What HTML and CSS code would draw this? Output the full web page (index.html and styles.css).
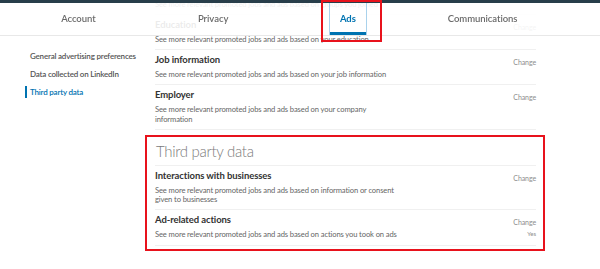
FILE: index.html
```html
<!DOCTYPE html>
<html lang="en">
<head>
<meta charset="utf-8">
<title>Ads settings</title>
<link rel="stylesheet" href="styles.css">
</head>
<body>
<nav class="tabs">
  <div class="tabs-inner">
    <div class="tab"><a class="tab-link">Account</a></div>
    <div class="tab"><a class="tab-link">Privacy</a></div>
    <div class="tab"><a class="tab-link is-active">Ads</a></div>
    <div class="tab"><a class="tab-link">Communications</a></div>
  </div>
</nav>
<div class="mark mark-tab"></div>
<div class="mark mark-section"></div>

<div class="page">
  <aside class="sidebar">
    <a class="side-link">General advertising preferences</a>
    <a class="side-link">Data collected on LinkedIn</a>
    <a class="side-link is-active">Third party data</a>
  </aside>
  <main class="main">
    <div class="row row-tail">
      <p class="desc">See more relevant promoted jobs and ads based on groups you joined</p>
    </div>
    <div class="row">
      <div class="row-text">
        <h3 class="row-title">Education</h3>
        <p class="desc">See more relevant promoted jobs and ads based on your education</p>
      </div>
      <div class="row-side"><span class="change">Change</span></div>
    </div>
    <div class="row">
      <div class="row-text">
        <h3 class="row-title">Job information</h3>
        <p class="desc">See more relevant promoted jobs and ads based on your job information</p>
      </div>
      <div class="row-side"><span class="change">Change</span></div>
    </div>
    <div class="row">
      <div class="row-text">
        <h3 class="row-title">Employer</h3>
        <p class="desc">See more relevant promoted jobs and ads based on your company<br>information</p>
      </div>
      <div class="row-side"><span class="change">Change</span></div>
    </div>

    <section class="section">
      <h2 class="section-title">Third party data</h2>
      <div class="row">
        <div class="row-text">
          <h3 class="row-title">Interactions with businesses</h3>
          <p class="desc">See more relevant promoted jobs and ads based on information or consent<br>given to businesses</p>
        </div>
        <div class="row-side"><span class="change">Change</span></div>
      </div>
      <div class="row">
        <div class="row-text">
          <h3 class="row-title">Ad-related actions</h3>
          <p class="desc">See more relevant promoted jobs and ads based on actions you took on ads</p>
        </div>
        <div class="row-side"><span class="change">Change</span><span class="value">Yes</span></div>
      </div>
    </section>
  </main>
</div>
</body>
</html>
```

FILE: styles.css
```css
* { box-sizing: border-box; }
html, body { margin: 0; padding: 0; background: #fff; }
body {
  font-family: Lato, "Open Sans", "Liberation Sans", sans-serif;
  color: #333;
  width: 600px;
  height: 269px;
  overflow: hidden;
}
p, h2, h3 { margin: 0; }
a { text-decoration: none; }

/* top tab bar (sticky overlay) */
.tabs {
  position: fixed;
  top: 0;
  left: 0;
  width: 600px;
  height: 36px;
  border-top: 3px solid #283e4a;
  border-bottom: 1px solid #e8e8e8;
  background: rgba(255, 255, 255, 0.9);
  z-index: 5;
}
.tabs-inner {
  display: flex;
  width: 550px;
  height: 100%;
  padding-left: 11px;
}
.tab {
  flex: 1;
  display: flex;
  justify-content: center;
}
.tab-link {
  display: flex;
  align-items: center;
  padding: 0 11px 1px;
  font-size: 9.5px;
  font-weight: 600;
  color: #6a6a6a;
  letter-spacing: -0.05px;
}
.tab-link.is-active {
  color: #0073b1;
  font-weight: 700;
  padding: 0 10px 1px;
  border-left: 1px solid #a9d2ec;
  border-right: 1px solid #a9d2ec;
  box-shadow: inset 0 -3px 0 #0073b1;
}

/* red annotation marks */
.mark {
  position: absolute;
  border: 2px solid #e8121c;
  z-index: 10;
}
.mark-tab { left: 321px; top: 0; width: 61px; height: 42px; }
.mark-section { left: 145px; top: 135px; width: 400px; height: 116px; }

/* page */
.page {
  display: flex;
  padding-left: 25px;
}
.sidebar {
  width: 130px;
  padding-top: 47px;
  display: flex;
  flex-direction: column;
}
.side-link {
  display: block;
  line-height: 18px;
  padding-left: 5px;
  font-size: 8px;
  font-weight: 600;
  letter-spacing: -0.2px;
  color: #555;
}
.side-link.is-active {
  color: #0073b1;
  border-left: 2px solid #0073b1;
  padding-left: 3px;
  line-height: 12px;
  margin-top: 3px;
}
.main {
  width: 381px;
}

.row {
  display: flex;
  justify-content: space-between;
  padding: 4px 0 4.5px;
  border-bottom: 1px solid #f0f0f0;
}
.row-tail { padding-top: 0; }
.row-title {
  font-size: 9.5px;
  line-height: 12px;
  font-weight: 700;
  letter-spacing: -0.1px;
  color: #333;
}
.desc {
  margin-top: 4px;
  font-size: 7.6px;
  line-height: 9.5px;
  letter-spacing: -0.12px;
  color: #666;
}
.row-tail .desc { margin-top: 0; }
.row-side {
  display: flex;
  flex-direction: column;
  align-items: flex-end;
  padding-top: 2px;
}
.change {
  font-size: 7px;
  line-height: 12px;
  letter-spacing: -0.1px;
  color: #8c8c8c;
}
.value {
  font-size: 6px;
  line-height: 12px;
  color: #8c8c8c;
}

.section { margin-top: 11px; }
.section-title {
  font-size: 15px;
  line-height: 20px;
  font-weight: 300;
  letter-spacing: -0.3px;
  color: #7a7a7a;
  padding-left: 1px;
  padding-bottom: 4px;
  border-bottom: 1px solid #f0f0f0;
}
```
